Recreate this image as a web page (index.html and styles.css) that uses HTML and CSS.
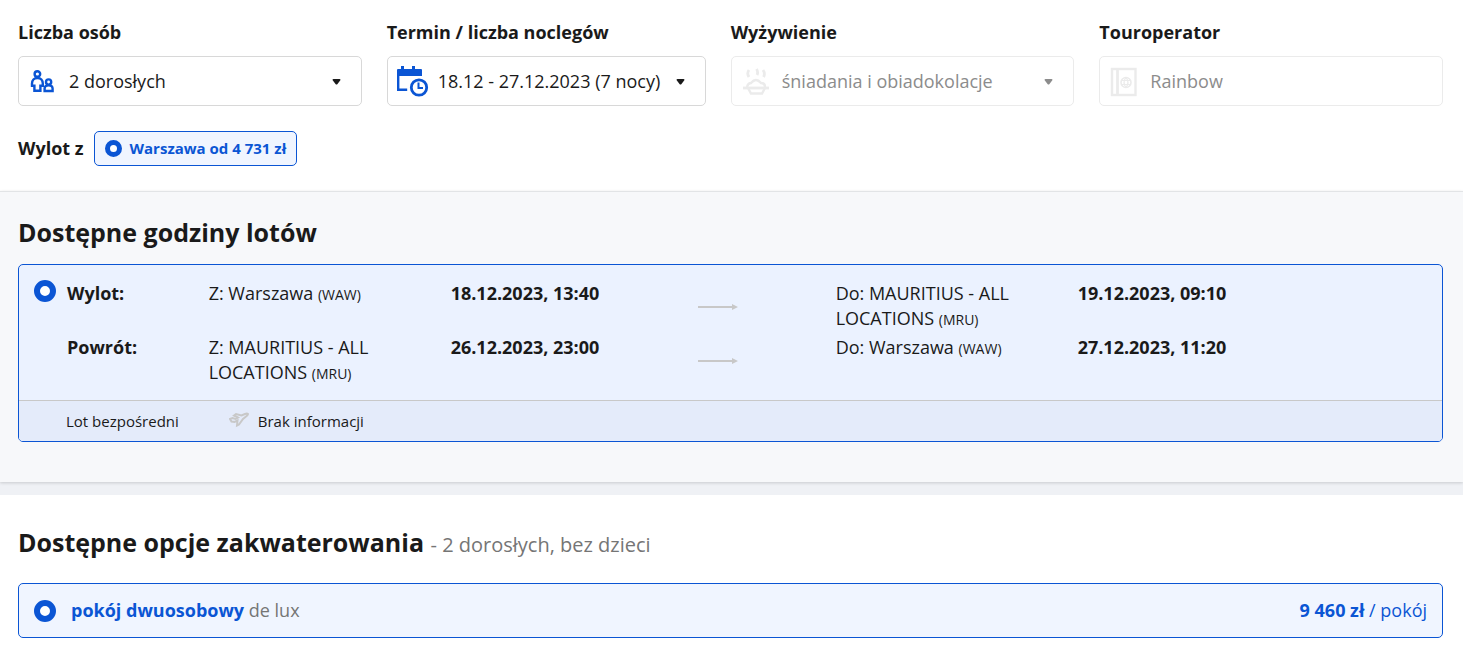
FILE: index.html
```html
<!DOCTYPE html>
<html lang="pl">

<head>
    <meta charset="UTF-8">
    <meta name="viewport" content="width=device-width, initial-scale=1.0">
    <title>Konfigurator wycieczki</title>
    <link rel="stylesheet" href="styles.css">
</head>

<body>
    <section class="config">
        <div class="filters">
            <div class="field">
                <label for="persons">Liczba osób</label>
                <div class="control">
                    <svg class="icon" viewBox="0 0 34 34" fill="none" stroke="#0b55d4" stroke-width="2.4">
                        <circle cx="11.4" cy="10" r="2.8" />
                        <path d="M11.4 14c-3.4 0-5.4 2.4-5.4 5.6v2.2h2.4v5h6v-5h2.4v-2.2c0-3.2-1.9-5.6-5.4-5.6z" />
                        <circle cx="22.6" cy="18" r="2.6" />
                        <path d="M22.6 21.4c-2.6 0-4 1.4-4 3.2v2.4h8v-2.4c0-1.8-1.4-3.2-4-3.2z" />
                    </svg>
                    <select id="persons">
                        <option>2 dorosłych</option>
                    </select>
                    <svg class="caret" viewBox="0 0 8 6"><path d="M0 1q0-1 1-1h6q1 0 1 1L5 5Q4 6 3 5z" /></svg>
                </div>
            </div>
            <div class="field">
                <label for="term">Termin / liczba noclegów</label>
                <div class="control">
                    <svg class="icon" viewBox="0 0 34 34" fill="none" stroke="#0b55d4" stroke-width="2.4">
                        <path d="M2 6q0-1 1-1h3V2h3v3h8V2h3v3h6q1 0 1 1v6H2z" fill="#0b55d4" stroke="none" />
                        <path d="M3.2 10v15.8h9" />
                        <circle cx="24" cy="23.5" r="7.7" stroke-width="2.8" />
                        <path d="M23.5 18.5v5.5h4.5" stroke-width="2" />
                    </svg>
                    <select id="term">
                        <option>18.12 - 27.12.2023 (7 nocy)</option>
                    </select>
                    <svg class="caret" viewBox="0 0 8 6"><path d="M0 1q0-1 1-1h6q1 0 1 1L5 5Q4 6 3 5z" /></svg>
                </div>
            </div>
            <div class="field">
                <label for="board">Wyżywienie</label>
                <div class="control disabled">
                    <svg class="icon" viewBox="0 0 34 34" fill="none" stroke="#ebebeb" stroke-width="2.8">
                        <path d="M10 6q-2.500 3.500 0 7M17.500 5q2 3 .5 6M24 6q2.500 3.500.5 7" />
                        <path d="M4 24h26" />
                        <path d="M9 24l3 5.500h11l3-5.500M8 23q1-4 4-4 5-6 10 0 4 0 4 4" stroke-width="2.4" />
                    </svg>
                    <select id="board" disabled>
                        <option>śniadania i obiadokolacje</option>
                    </select>
                    <svg class="caret" viewBox="0 0 8 6"><path d="M0 1q0-1 1-1h6q1 0 1 1L5 5Q4 6 3 5z" /></svg>
                </div>
            </div>
            <div class="field">
                <label for="operator">Touroperator</label>
                <div class="control disabled">
                    <svg class="icon" viewBox="0 0 34 34" fill="none" stroke="#ebebeb">
                        <rect x="5" y="5" width="23.5" height="26" stroke-width="2.4" />
                        <path d="M10.5 5v26" stroke-width="2.8" />
                        <circle cx="19" cy="18.5" r="5" stroke-width="1.6" />
                        <path d="M14 16.5h10M14 20.5h10M19 13.5q-4 5 0 10M19 13.5q4 5 0 10" stroke-width="1.2" />
                    </svg>
                    <input id="operator" type="text" value="Rainbow" disabled>
                </div>
            </div>
        </div>
        <div class="departure">
            <span class="departure-label">Wylot z</span>
            <label class="chip">
                <input class="radio small" type="radio" name="departure" checked>
                Warszawa od 4 731 zł
            </label>
        </div>
    </section>

    <section class="flights">
        <h2>Dostępne godziny lotów</h2>
        <div class="flight-card">
            <div class="flight-main">
                <input class="radio" type="radio" name="flight" aria-label="Wylot 18.12.2023" checked>
                <table class="flight-table">
                    <colgroup>
                        <col class="col-direction">
                        <col class="col-place">
                        <col class="col-date">
                        <col class="col-arrow">
                        <col class="col-place">
                        <col>
                    </colgroup>
                    <tr>
                        <th>Wylot:</th>
                        <td>Z: Warszawa <small>(WAW)</small></td>
                        <td class="date">18.12.2023, 13:40</td>
                        <td><svg class="arrow" viewBox="0 0 40 6"><path d="M0 2h34V0l6 3-6 3V4H0z" /></svg></td>
                        <td>Do: MAURITIUS - ALL LOCATIONS <small>(MRU)</small></td>
                        <td class="date">19.12.2023, 09:10</td>
                    </tr>
                    <tr>
                        <th>Powrót:</th>
                        <td>Z: MAURITIUS - ALL LOCATIONS <small>(MRU)</small></td>
                        <td class="date">26.12.2023, 23:00</td>
                        <td><svg class="arrow" viewBox="0 0 40 6"><path d="M0 2h34V0l6 3-6 3V4H0z" /></svg></td>
                        <td>Do: Warszawa <small>(WAW)</small></td>
                        <td class="date">27.12.2023, 11:20</td>
                    </tr>
                </table>
            </div>
            <div class="flight-info">
                <span>Lot bezpośredni</span>
                <span class="luggage">
                    <svg class="plane" viewBox="0 0 20 16" fill="none" stroke="#c8c8c8" stroke-width="2">
                        <path d="M1 7l2.5-1 3 1 2.500-1.500-4-2 2-1.500 5.500 1.500 3.500-1.500q2-.8 3 0-.3 1.500-2 2.500l-3 2.500-4 5.500-2 1 .5-5-3 1.500-3-.5z" />
                    </svg>
                    Brak informacji
                </span>
            </div>
        </div>
    </section>

    <section class="rooms">
        <h2>Dostępne opcje zakwaterowania <span class="guests">- 2 dorosłych, bez dzieci</span></h2>
        <label class="room-card">
            <input class="radio" type="radio" name="room" checked>
            <span class="room-name"><b>pokój dwuosobowy</b> <span class="room-type">de lux</span></span>
            <span class="room-price"><b>9 460 zł</b> / pokój</span>
        </label>
    </section>
</body>

</html>
```

FILE: styles.css
```css
* {
    box-sizing: border-box;
}

body {
    margin: 0;
    font-family: "Open Sans", "Noto Sans", sans-serif;
    font-size: 18px;
    line-height: 25px;
    color: #1a1a1a;
    background-color: #eff1f5;
}

h2 {
    margin: 0;
    font-size: 25px;
    line-height: 36px;
    font-weight: bold;
}

.config {
    padding: 20px 20px 25px 18px;
    background-color: #fff;
}

.filters {
    display: grid;
    grid-template-columns: 14fr 13fr 14fr 14fr;
    gap: 25px;
}

.field label {
    display: block;
    margin-bottom: 11px;
    font-weight: bold;
}

.control {
    position: relative;
}

.control select,
.control input {
    display: block;
    width: 100%;
    height: 50px;
    padding: 0 40px 0 50px;
    border: 1px solid #d8d8d8;
    border-radius: 5px;
    background-color: #fff;
    font: inherit;
    color: #1a1a1a;
    appearance: none;
}

.control.disabled select,
.control.disabled input {
    border-color: #ebebeb;
    color: #8c8c8c;
    opacity: 1;
}

/* icon and caret lie over the control */
.icon {
    position: absolute;
    top: 8px;
    left: 8px;
    width: 34px;
    height: 34px;
    pointer-events: none;
}

.caret {
    position: absolute;
    top: 23px;
    right: 21px;
    width: 9px;
    height: 6px;
    fill: #1a1a1a;
    pointer-events: none;
}

.disabled .caret {
    fill: #8c8c8c;
}

.departure {
    display: flex;
    align-items: center;
    gap: 10px;
    margin-top: 25px;
}

.departure-label {
    font-weight: bold;
}

.chip {
    display: flex;
    align-items: center;
    gap: 8px;
    height: 35px;
    padding: 0 10px;
    border: 1px solid #0b55d4;
    border-radius: 5px;
    background-color: #f0f5ff;
    font-size: 15px;
    font-weight: bold;
    color: #0b55d4;
}

.radio {
    flex: none;
    width: 22px;
    height: 22px;
    margin: 0;
    border: 6px solid #0b55d4;
    border-radius: 50%;
    background-color: #fff;
    appearance: none;
}

.radio.small {
    width: 17px;
    height: 17px;
    border-width: 5px;
}

.flights {
    padding: 22px 20px 40px 18px;
    border-top: 1px solid #e2e4e6;
    background-color: #f7f8fa;
    box-shadow: 0 1px 3px rgba(0, 0, 0, 0.16);
}

.flight-card {
    margin-top: 14px;
    border: 1px solid #0b55d4;
    border-radius: 5px;
    background-color: #ebf2ff;
    overflow: hidden;
}

.flight-main {
    display: flex;
    gap: 11px;
    padding: 15px 0 12px 15px;
}

.flight-table {
    width: 100%;
    table-layout: fixed;
    border-collapse: collapse;
}

.col-direction {
    width: 10.3%;
}

.col-place {
    width: 17.6%;
}

.col-date {
    width: 18%;
}

.col-arrow {
    width: 10%;
}

.flight-table th,
.flight-table td {
    padding: 1px 50px 3px 0;
    text-align: left;
    vertical-align: top;
}

.flight-table th,
.flight-table .date {
    padding-right: 0;
    font-weight: bold;
}

.flight-table small {
    font-size: 14px;
    line-height: 1;
}

.arrow {
    display: block;
    width: 40px;
    height: 6px;
    margin-top: 23px;
    fill: #c8c8c8;
}

.flight-info {
    display: flex;
    gap: 50px;
    padding: 8px 47px 7px;
    border-top: 1px solid #c8c8c8;
    background-color: #e4ebfa;
    font-size: 15px;
}

.luggage {
    display: flex;
    gap: 9px;
}

.plane {
    width: 20px;
    height: 16px;
    margin-top: 3px;
}

.rooms {
    margin-top: 13px;
    padding: 29px 20px 33px 18px;
    background-color: #fff;
}

.guests {
    font-size: 20px;
    font-weight: normal;
    color: #757575;
}

.room-card {
    display: flex;
    align-items: center;
    gap: 15px;
    height: 55px;
    margin-top: 20px;
    padding: 0 15px;
    border: 1px solid #0b55d4;
    border-radius: 5px;
    background-color: #f0f5ff;
    color: #0b55d4;
}

.room-name {
    flex: 1;
}

.room-type {
    color: #757575;
}
```
